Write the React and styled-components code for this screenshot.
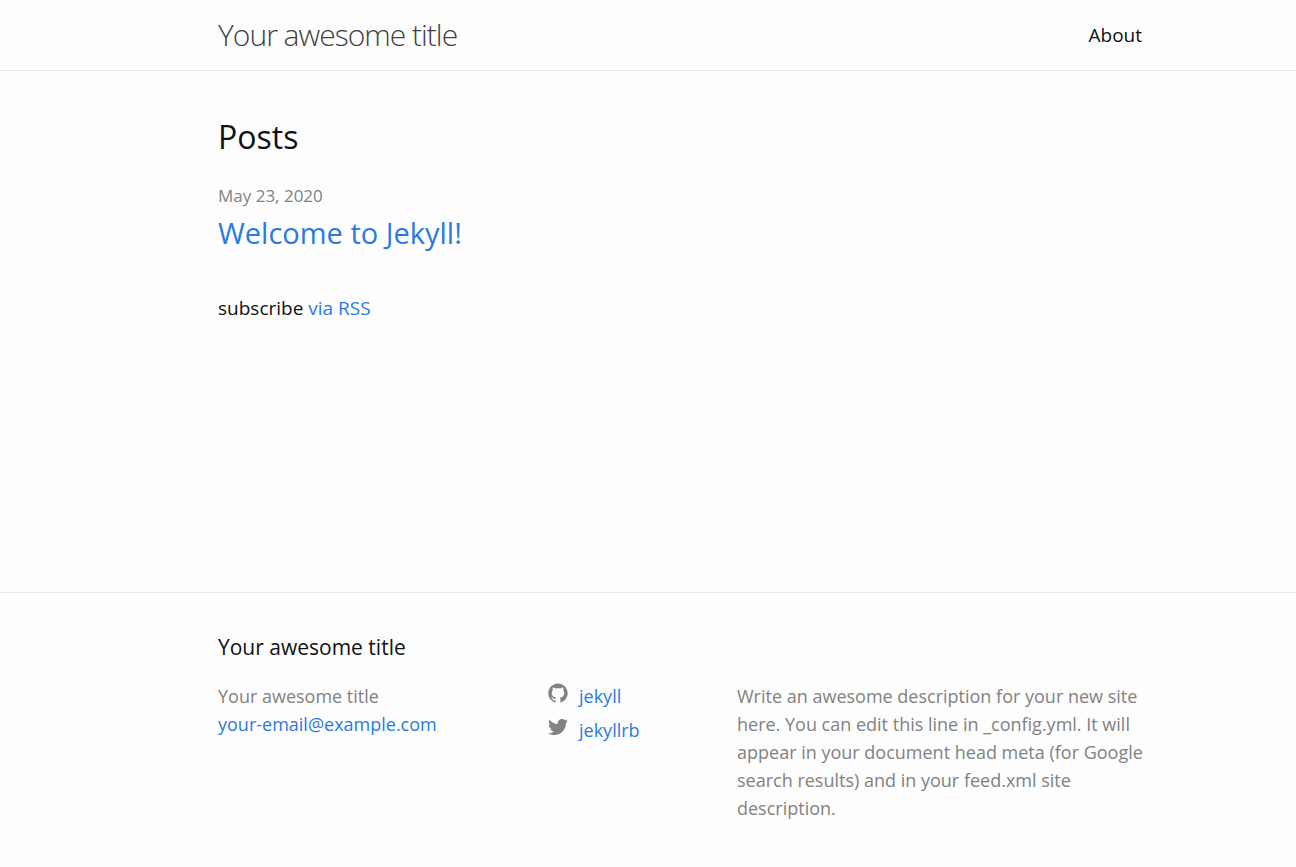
import React from "react";
import styled, { createGlobalStyle } from "styled-components";

const GlobalStyle = createGlobalStyle`
  *, *::before, *::after { box-sizing: border-box; }
  body {
    margin: 0;
    background: #fdfdfd;
    color: #111;
    font: 400 19px/30px "Open Sans", "Noto Sans", sans-serif;
  }
  h1, h2, h3, p, ul { margin: 0; padding: 0; font-weight: 400; }
  ul { list-style: none; }
`;

const Page = styled.div`
  display: flex;
  flex-direction: column;
  min-height: 100vh;
`;

const Wrapper = styled.div`
  width: 100%;
  max-width: 1064px;
  margin: 0 auto;
  padding: 0 38px 0 102px;
`;

const Link = styled.a`
  color: #2a7ae2;
  text-decoration: none;
  &:hover { text-decoration: underline; }
`;

const Header = styled.header`
  border-bottom: 1px solid #e8e8e8;
`;

const HeaderRow = styled(Wrapper)`
  display: flex;
  justify-content: space-between;
  align-items: center;
  min-height: 70px;
`;

const SiteTitle = styled.a`
  color: #424242;
  font-size: 30px;
  font-weight: 300;
  letter-spacing: -1px;
  text-decoration: none;
`;

const NavLink = styled.a`
  color: #111;
  text-decoration: none;
`;

const Main = styled.main`
  flex: 1;
  padding: 38px 0 45px;
`;

const Heading = styled.h2`
  font-size: 32px;
  line-height: 56px;
`;

const PostList = styled.ul`
  padding-top: 16px;
`;

const PostDate = styled.time`
  display: block;
  color: #828282;
  font-size: 17px;
`;

const PostTitle = styled.h3`
  font-size: 29px;
  line-height: 44px;
`;

const Subscribe = styled.p`
  margin-top: 38px;
`;

const Footer = styled.footer`
  border-top: 1px solid #e8e8e8;
  padding: 39px 0 45px;
`;

const FooterWrapper = styled(Wrapper)`
  padding-right: 28px;
`;

const FooterHeading = styled.h2`
  font-size: 21px;
  line-height: 30px;
  margin-bottom: 20px;
`;

const Columns = styled.div`
  display: grid;
  grid-template-columns: 330fr 189fr 415fr;
  color: #828282;
  font-size: 18px;
  line-height: 28px;
`;

const SocialItem = styled.li`
  display: flex;
  gap: 11px;
  margin-bottom: 6px;
`;

const Icon = styled.svg`
  width: 20px;
  height: 20px;
  margin-top: 1px;
  fill: #828282;
`;

const TwitterIcon = () => (
  <Icon viewBox="0 0 16 16" aria-hidden="true">
    <path d="M15.969,3.058c-0.586,0.26-1.217,0.436-1.878,0.515c0.675-0.405,1.194-1.045,1.438-1.809c-0.632,0.375-1.332,0.647-2.076,0.793c-0.596-0.636-1.446-1.033-2.387-1.033c-1.806,0-3.27,1.464-3.27,3.27 c0,0.256,0.029,0.506,0.085,0.745C5.163,5.404,2.753,4.102,1.14,2.124C0.859,2.607,0.698,3.168,0.698,3.767 c0,1.134,0.577,2.135,1.455,2.722C1.616,6.472,1.112,6.325,0.671,6.08c0,0.014,0,0.027,0,0.041c0,1.584,1.127,2.906,2.623,3.206 C3.02,9.402,2.731,9.442,2.433,9.442c-0.211,0-0.416-0.021-0.615-0.059c0.416,1.299,1.624,2.245,3.055,2.271 c-1.119,0.877-2.529,1.4-4.061,1.4c-0.264,0-0.524-0.015-0.78-0.046c1.447,0.928,3.166,1.469,5.013,1.469 c6.015,0,9.304-4.983,9.304-9.304c0-0.142-0.003-0.283-0.009-0.423C14.976,4.29,15.531,3.714,15.969,3.058z" />
  </Icon>
);

const GithubIcon = () => (
  <Icon viewBox="0 0 16 16" aria-hidden="true">
    <path d="M7.999,0.431c-4.285,0-7.76,3.474-7.76,7.761 c0,3.428,2.223,6.337,5.307,7.363c0.388,0.071,0.53-0.168,0.53-0.374c0-0.184-0.007-0.672-0.01-1.32 c-2.159,0.469-2.614-1.04-2.614-1.04c-0.353-0.896-0.862-1.135-0.862-1.135c-0.705-0.481,0.053-0.472,0.053-0.472 c0.779,0.055,1.189,0.8,1.189,0.8c0.692,1.186,1.816,0.843,2.258,0.645c0.071-0.502,0.271-0.843,0.493-1.037 C4.86,11.425,3.049,10.76,3.049,7.786c0-0.847,0.302-1.54,0.799-2.082C3.768,5.507,3.501,4.718,3.924,3.65 c0,0,0.652-0.209,2.134,0.796C6.677,4.273,7.34,4.187,8,4.184c0.659,0.003,1.323,0.089,1.943,0.261 c1.482-1.004,2.132-0.796,2.132-0.796c0.423,1.068,0.157,1.857,0.077,2.054c0.497,0.542,0.798,1.235,0.798,2.082 c0,2.981-1.814,3.637-3.543,3.829c0.279,0.24,0.527,0.713,0.527,1.437c0,1.037-0.01,1.874-0.01,2.129 c0,0.208,0.14,0.449,0.534,0.373c3.081-1.028,5.302-3.935,5.302-7.362C15.76,3.906,12.285,0.431,7.999,0.431z" />
  </Icon>
);

export default function App() {
  return (
    <Page>
      <GlobalStyle />
      <Header>
        <HeaderRow>
          <SiteTitle href="#">Your awesome title</SiteTitle>
          <nav><NavLink href="#about">About</NavLink></nav>
        </HeaderRow>
      </Header>
      <Main>
        <Wrapper>
          <Heading>Posts</Heading>
          <PostList>
            <li>
              <PostDate dateTime="2020-05-23">May 23, 2020</PostDate>
              <PostTitle><Link href="#welcome">Welcome to Jekyll!</Link></PostTitle>
            </li>
          </PostList>
          <Subscribe>subscribe <Link href="#rss">via RSS</Link></Subscribe>
        </Wrapper>
      </Main>
      <Footer>
        <FooterWrapper>
          <FooterHeading>Your awesome title</FooterHeading>
          <Columns>
            <ul>
              <li>Your awesome title</li>
              <li><Link href="mailto:your-email@example.com">your-email@example.com</Link></li>
            </ul>
            <ul>
              <SocialItem><GithubIcon /><Link href="#jekyll">jekyll</Link></SocialItem>
              <SocialItem><TwitterIcon /><Link href="#jekyllrb">jekyllrb</Link></SocialItem>
            </ul>
            <p>
              Write an awesome description for your new site here. You can edit this line in _config.yml. It will appear in your document head meta (for Google search results) and in your feed.xml site description.
            </p>
          </Columns>
        </FooterWrapper>
      </Footer>
    </Page>
  );
}
